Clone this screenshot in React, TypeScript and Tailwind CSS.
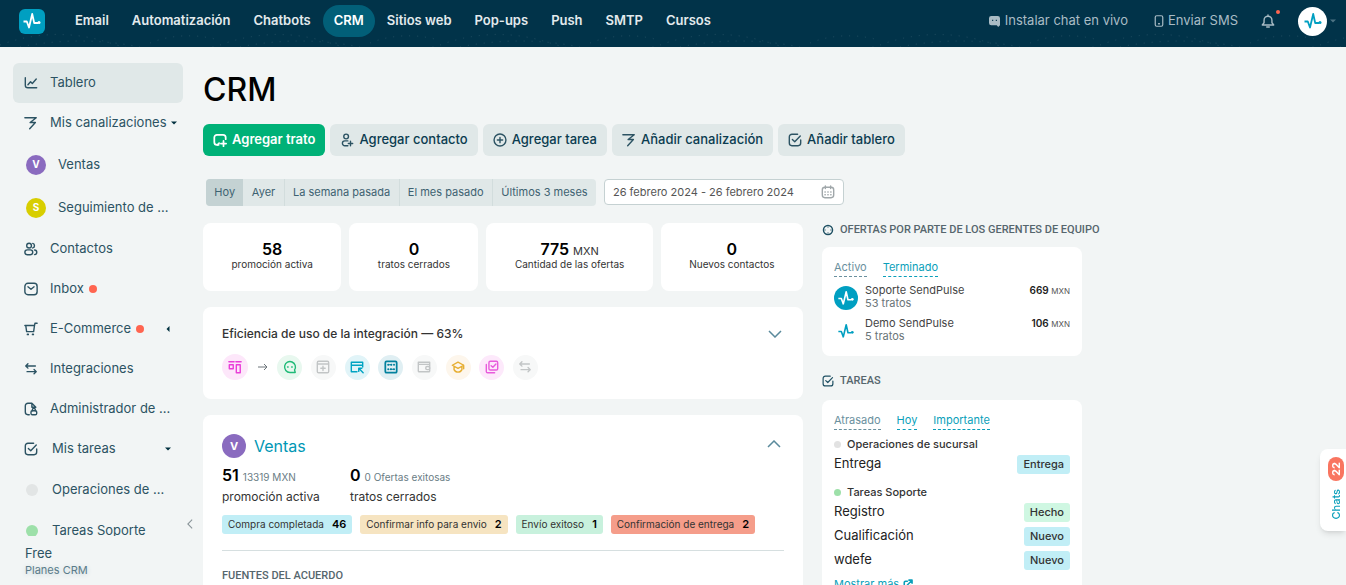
import type { ReactNode } from 'react'
import clsx from 'clsx'

const ICONS = {
  chart: <path d="M1.500 2v8.500a3 3 0 0 0 3 3H14.500M4.500 10 7.500 6.500l2 2L14 3.500" />,
  funnel: <path d="M1 2h13L7 7.500h6L6.500 14.500" />,
  people: (
    <>
      <circle cx="5.800" cy="4.200" r="2.700" />
      <path d="M10 1.600a2.700 2.700 0 0 1 0 5.200M12 9.200a2.600 2.600 0 0 1 0 5.200" />
      <rect x="1" y="9" width="9" height="5.500" rx="2.750" />
    </>
  ),
  mail: (
    <>
      <rect x="1" y="1.500" width="14" height="13" rx="3.500" />
      <path d="M4.500 5.500 8 8.300l3.500-2.800" />
    </>
  ),
  cart: (
    <>
      <path d="M1 4h11l-1 7H3L2 4M12 4l.5-2.500H15" />
      <path d="M4 14.200h.8M9.800 14.200h.8" strokeWidth="2" />
    </>
  ),
  swap: <path d="M4.500 2 2 4.500 4.500 7M2 4.500h11M11.500 8.500 14 11l-2.500 2.500M14 11H3.500" />,
  file: (
    <>
      <path d="M6 14.500H4.500a3 3 0 0 1-3-3v-7a3 3 0 0 1 3-3H9L13.500 6M9 1.500V6h4.500" />
      <rect x="8" y="10" width="6.500" height="4.500" rx="1.500" />
      <path d="M9.500 10V9a1.700 1.700 0 0 1 3.500 0v1" />
    </>
  ),
  task: (
    <>
      <path d="M11 1.500H4.500a3 3 0 0 0-3 3v7a3 3 0 0 0 3 3h7a3 3 0 0 0 3-3V8" />
      <path d="M5 7.500 7.700 10 14 3.500" />
    </>
  ),
  deal: (
    <>
      <path d="M6.500 13.500H4.500a3 3 0 0 1-3-3V5a3 3 0 0 1 3-3h7a3 3 0 0 1 3 3v2" />
      <path d="M5 13.500l2-2M12 9v6M9 12h6" />
    </>
  ),
  person: (
    <>
      <circle cx="7" cy="4" r="2.700" />
      <path d="M9 14.500H5.500a2.750 2.750 0 0 1 0-5.500H9M12 9.500v5M9.500 12h5" />
    </>
  ),
  plus: (
    <>
      <circle cx="8" cy="8" r="6.800" />
      <path d="M8 5v6M5 8h6" />
    </>
  ),
  calendar: (
    <>
      <rect x="1.500" y="2.500" width="13" height="12" rx="3" />
      <path d="M5 1v3M11 1v3" />
      <path d="M4.500 8h7M4.500 11.200h7" strokeDasharray=".4 2.900" />
    </>
  ),
  target: (
    <>
      <circle cx="8" cy="8" r="6" strokeWidth="2" />
      <path d="M8 4.200v.2M8 11.600v.2M4.200 8h.2M11.600 8h.2" strokeWidth="1.200" />
    </>
  ),
  bell: (
    <>
      <path d="M1.500 12.500h13l-2-2.500V7a4.500 4.500 0 0 0-9 0v3zM8 2.500V1" />
      <path d="M6.500 14.800h3" />
    </>
  ),
  phone: (
    <>
      <rect x="3" y="1" width="10" height="14" rx="2" />
      <path d="M7.500 11.800h1" strokeWidth="2" />
    </>
  ),
  board: (
    <>
      <path d="M1 2h6M9 2h6" />
      <rect x="1.500" y="5.500" width="4.500" height="4.500" />
      <rect x="9.500" y="5.500" width="4.500" height="9" />
    </>
  ),
  chat: (
    <>
      <path d="M14 14.200H8a6.200 6.200 0 1 1 5.200-2.800z" />
      <path d="M5.300 8h.5M10 8h.5" strokeWidth="1.800" />
    </>
  ),
  popup: (
    <>
      <rect x="1.500" y="1.500" width="13" height="13" rx="1.500" />
      <path d="M2 4.500h12M8 7v5M5.500 9.500h5" />
    </>
  ),
  site: (
    <>
      <path d="M8 13.500H1.500v-11h13V8M2 6h12.500" />
      <path d="M15 14.500 10 9.500m0 3.500V9.500h3.500" />
    </>
  ),
  flow: (
    <>
      <rect x="1.500" y="1.500" width="13" height="13" rx="1.500" strokeWidth="2" />
      <path d="M4.800 5.500h4M7 10.500h4" strokeWidth="1.200" />
      <path d="M4.800 5.500h.1M8.300 5.500h.1M11.400 5.500h.1M4.800 10.500h.1M7.900 10.500h.1M11.400 10.500h.1" strokeWidth="2.200" />
    </>
  ),
  wallet: (
    <>
      <path d="M14.500 5V2.500h-13v10a1 1 0 0 0 1 1h11a1 1 0 0 0 1-1V5H2" />
      <rect x="10" y="7.500" width="4.500" height="3.500" rx="1.500" />
    </>
  ),
  course: <path d="M8 2.500 1.500 6 8 9.500 14.500 6zM3.500 7.500v3.500a5 5 0 0 0 9 0V7.500M14.500 6v4" />,
  checks: (
    <>
      <rect x="4.500" y="1.500" width="10" height="10" rx="1.500" />
      <path d="M1.500 5v8a1.500 1.500 0 0 0 1.500 1.500h8M7 6.500 9 8.300l3.500-3.800" />
    </>
  ),
  external: (
    <>
      <path d="M7 3.500H4a2 2 0 0 0-2 2V12a2 2 0 0 0 2 2h6.500a2 2 0 0 0 2-2v-1.500" />
      <path d="M7 9.500 14 2.500M9.500 1.800H14.500V6.800" />
    </>
  ),
}

type IconName = keyof typeof ICONS

function Icon({ name, className = 'size-3.5' }: { name: IconName; className?: string }) {
  return (
    <svg
      viewBox="0 0 16 16"
      fill="none"
      stroke="currentColor"
      strokeWidth="1.6"
      strokeLinecap="round"
      strokeLinejoin="round"
      className={clsx('shrink-0', className)}
      aria-hidden
    >
      {ICONS[name]}
    </svg>
  )
}

function Pulse({ className }: { className: string }) {
  return (
    <svg viewBox="0 0 20 20" fill="none" stroke="currentColor" strokeWidth="1.8" className={className} aria-hidden>
      <path d="M1.500 10.500h3.300L7 16.500 10.200 3l2 9H16" strokeLinejoin="round" />
      <circle cx="17" cy="11.500" r="1.500" fill="currentColor" stroke="none" />
    </svg>
  )
}

function Caret({ className }: { className: string }) {
  return (
    <svg viewBox="0 0 6 4" fill="currentColor" className={clsx('h-1 w-1.5 shrink-0', className)} aria-hidden>
      <path d="M0 .5h6L3 3.500z" />
    </svg>
  )
}

function Chevron({ className }: { className: string }) {
  return (
    <svg viewBox="0 0 14 8" fill="none" stroke="currentColor" strokeWidth="1.5" className={className} aria-hidden>
      <path d="M1 1l6 6 6-6" />
    </svg>
  )
}

const SECTIONS = ['Email', 'Automatización', 'Chatbots', 'CRM', 'Sitios web', 'Pop-ups', 'Push', 'SMTP', 'Cursos']

function Header() {
  return (
    <header className="relative flex h-[47px] shrink-0 items-center bg-[#013349] pr-2.5 pb-[5px] pl-[19px] text-[13px]">
      <svg className="absolute inset-x-0 bottom-0 h-4 w-full" aria-hidden>
        <defs>
          <pattern id="dots" width="220" height="16" patternUnits="userSpaceOnUse">
            <path
              d="M0 14Q55-6 110 12T220 14M20 16Q80 4 140 16M150 12Q180 0 215 8"
              fill="none"
              stroke="#1d4a5e"
              strokeDasharray="1 7"
            />
          </pattern>
        </defs>
        <rect width="100%" height="16" fill="url(#dots)" />
      </svg>
      <a href="#" aria-label="SendPulse" className="mr-[19px] flex h-[25px] w-[26px] items-center justify-center rounded-md bg-[#009fc1] text-white">
        <Pulse className="size-5" />
      </a>
      <nav className="relative flex gap-px">
        {SECTIONS.map((name) => (
          <a
            key={name}
            href="#"
            className={clsx(
              'flex h-8 items-center rounded-full px-[11px] font-semibold whitespace-nowrap',
              name === 'CRM' ? 'bg-[#025f78] text-white' : 'text-[#e3eaed]',
            )}
          >
            {name}
          </a>
        ))}
      </nav>
      <div className="relative ml-auto flex items-center text-[#a9bcc5]">
        <a href="#" className="flex items-center gap-[5px]">
          <svg viewBox="0 0 12 12" className="size-[11px]" aria-hidden>
            <path d="M2.500 0h7A2.500 2.500 0 0 1 12 2.500V10l-2 2-1.500-2h-6A2.500 2.500 0 0 1 0 7.500v-5A2.500 2.500 0 0 1 2.500 0z" fill="currentColor" />
            <path d="M4 4v1.500M8 4v1.500" stroke="#013349" strokeWidth="1.200" />
          </svg>
          Instalar chat en vivo
        </a>
        <a href="#" className="ml-[25px] flex items-center gap-[3px]">
          <Icon name="phone" className="size-3" />
          Enviar SMS
        </a>
        <button aria-label="Notificaciones" className="relative ml-[23px]">
          <Icon name="bell" />
          <span className="absolute -top-1 -right-[5px] size-1 rounded-full bg-[#ff6550]" />
        </button>
        <button aria-label="Cuenta" className="ml-[23px] flex items-center gap-[3px]">
          <span className="flex size-[29px] items-center justify-center rounded-full bg-white text-[#009fc1]">
            <Pulse className="size-5" />
          </span>
          <Caret className="text-[#4d7383]" />
        </button>
      </div>
    </header>
  )
}

type NavRowProps = { icon?: IconName; children: ReactNode; active?: boolean; wide?: boolean; end?: ReactNode }

function NavRow({ icon, children, active, wide, end }: NavRowProps) {
  return (
    <a
      href="#"
      className={clsx(
        'flex h-10 shrink-0 items-center rounded-md pr-3 pl-[11px] whitespace-nowrap',
        wide ? 'gap-[14px]' : 'gap-3',
        active && 'bg-[#e0e8e8]',
      )}
    >
      {icon && <Icon name={icon} />}
      {children}
      {end}
    </a>
  )
}

function PipelineRow({ letter, color, name }: { letter: string; color: string; name: string }) {
  return (
    <a href="#" className="flex h-[43px] shrink-0 items-center gap-3 pl-[13px] whitespace-nowrap">
      <span className={clsx('flex size-5 items-center justify-center rounded-full text-[10px] font-bold text-white', color)}>
        {letter}
      </span>
      {name}
    </a>
  )
}

function BoardRow({ color, name }: { color: string; name: string }) {
  return (
    <a href="#" className="flex h-[41px] shrink-0 items-center gap-[14px] pl-[13px] whitespace-nowrap">
      <span className={clsx('size-3 rounded-full', color)} />
      {name}
    </a>
  )
}

function Sidebar() {
  const alert = <span className="-ml-[7px] size-2 rounded-full bg-[#ff6550]" />
  return (
    <aside className="flex w-[203px] shrink-0 pt-4 pl-[13px] text-[13px] text-[#2c5363]">
      <div className="flex min-h-0 w-[170px] flex-col">
        <nav className="flex min-h-0 flex-1 flex-col overflow-hidden">
          <NavRow icon="chart" active>Tablero</NavRow>
          <NavRow icon="funnel" end={<Caret className="-ml-2 text-[#01303f]" />}>Mis canalizaciones</NavRow>
          <PipelineRow letter="V" color="bg-[#8a6bbf]" name="Ventas" />
          <PipelineRow letter="S" color="bg-[#d8ce00]" name="Seguimiento de ..." />
          <NavRow icon="people">Contactos</NavRow>
          <NavRow icon="mail" end={alert}>Inbox</NavRow>
          <NavRow icon="cart" end={<>{alert}<Caret className="ml-auto rotate-90 text-[#01303f]" /></>}>E-Commerce</NavRow>
          <NavRow icon="swap">Integraciones</NavRow>
          <NavRow icon="file">Administrador de ...</NavRow>
          <NavRow icon="task" wide end={<Caret className="ml-auto text-[#01303f]" />}>Mis tareas</NavRow>
          <BoardRow color="bg-[#e2e5e5]" name="Operaciones de ..." />
          <BoardRow color="bg-[#9de0a9]" name="Tareas Soporte" />
        </nav>
        <div className="px-3 pt-2 pb-[7px]">
          <div className="leading-[18px]">Free</div>
          <a href="#" className="block text-[11px] leading-4 text-[#5b7c89] [text-shadow:0_1px_5px_#c3d2d7]">Planes CRM</a>
        </div>
      </div>
      <button aria-label="Contraer menú" className="mb-[58px] ml-0.5 self-end text-[#8a9599]">
        <Chevron className="h-1.5 w-2.5 rotate-90" />
      </button>
    </aside>
  )
}

const ACTIONS: { icon: IconName; label: string; primary?: boolean }[] = [
  { icon: 'deal', label: 'Agregar trato', primary: true },
  { icon: 'person', label: 'Agregar contacto' },
  { icon: 'plus', label: 'Agregar tarea' },
  { icon: 'funnel', label: 'Añadir canalización' },
  { icon: 'task', label: 'Añadir tablero' },
]

const PERIODS = ['Hoy', 'Ayer', 'La semana pasada', 'El mes pasado', 'Últimos 3 meses']

const STATS = [
  { value: '58', label: 'promoción activa' },
  { value: '0', label: 'tratos cerrados' },
  { value: '775', unit: 'MXN', label: 'Cantidad de las ofertas' },
  { value: '0', label: 'Nuevos contactos' },
]

const INTEGRATIONS: { icon: IconName; style: string }[] = [
  { icon: 'chat', style: 'bg-[#e8f8ef] text-[#1fba77]' },
  { icon: 'popup', style: 'bg-[#f7f8f8] text-[#c2c5c6]' },
  { icon: 'site', style: 'bg-[#e1f4f8] text-[#00a3c2]' },
  { icon: 'flow', style: 'bg-[#e0eff3] text-[#02819e]' },
  { icon: 'wallet', style: 'bg-[#f7f8f8] text-[#c2c5c6]' },
  { icon: 'course', style: 'bg-[#fdf6ec] text-[#e6ae32]' },
  { icon: 'checks', style: 'bg-[#fde9fb] text-[#e85bdc]' },
  { icon: 'swap', style: 'bg-[#f7f8f8] text-[#c2c5c6]' },
]

const STAGES = [
  { label: 'Compra completada', count: 46, color: 'bg-[#c1eef6]' },
  { label: 'Confirmar info para envio', count: 2, color: 'bg-[#f6e4c1]' },
  { label: 'Envío exitoso', count: 1, color: 'bg-[#c8f1dd]' },
  { label: 'Confirmación de entrega', count: 2, color: 'bg-[#f59d8a]' },
]

function Toolbar() {
  return (
    <>
      <h1 className="text-[32px] leading-10 font-medium text-black">CRM</h1>
      <div className="mt-3.5 flex gap-[5px]">
        {ACTIONS.map(({ icon, label, primary }) => (
          <button
            key={label}
            className={clsx(
              'flex h-8 items-center gap-[5px] rounded-md px-2.5 text-[13px] whitespace-nowrap',
              primary ? 'bg-[#00b177] font-semibold text-white' : 'bg-[#e0e8e8] font-medium text-[#0b3c50]',
            )}
          >
            <Icon name={icon} className={primary ? 'size-3.5 stroke-2' : 'size-3.5 text-[#2c5363]'} />
            {label}
          </button>
        ))}
      </div>
      <div className="mt-[23px] flex gap-2 pl-[3px] text-xs">
        <div className="flex h-[27px] w-[390px] overflow-hidden rounded bg-[#e0e8e8] text-[11px] text-[#3d6271]">
          {PERIODS.map((period, i) => (
            <button
              key={period}
              className={clsx(
                'flex-auto px-[7px] whitespace-nowrap',
                i === 0 && 'bg-[#c4d2d3]',
                i > 1 && 'border-l border-[#d2dddd]',
              )}
            >
              {period}
            </button>
          ))}
        </div>
        <div className="flex h-[26px] w-[240px] items-center rounded border border-[#c5d1d2] bg-white px-2 text-[#a0a7aa]">
          <input
            aria-label="Intervalo de fechas"
            className="min-w-0 flex-1 text-[11px] text-[#555] outline-none"
            defaultValue="26 febrero 2024 - 26 febrero 2024"
          />
          <Icon name="calendar" />
        </div>
      </div>
    </>
  )
}

function Overview() {
  return (
    <div className="flex w-[600px] shrink-0 flex-col gap-4">
      <div className="flex gap-2">
        {STATS.map(({ value, unit, label }) => (
          <div key={label} className="flex h-[68px] flex-auto flex-col items-center rounded-lg bg-white pt-[18px] whitespace-nowrap">
            <div className="text-base leading-[17px] font-semibold text-black">
              {value}
              {unit && <span className="ml-1 text-[11px] leading-none font-normal text-[#333]">{unit}</span>}
            </div>
            <div className="px-[25px] text-[10px] leading-[13px] text-[#333]">{label}</div>
          </div>
        ))}
      </div>

      <section className="h-[92px] rounded-lg bg-white pt-[18px] pr-[21px] pl-[19px]">
        <div className="flex items-center justify-between text-xs leading-[18px] font-medium text-[#333]">
          Eficiencia de uso de la integración — 63%
          <button aria-label="Mostrar" className="text-[#5a8a9c]">
            <Chevron className="h-2 w-3.5" />
          </button>
        </div>
        <div className="mt-[11px] flex w-[316px] items-center justify-between">
          <span className="flex size-[26px] items-center justify-center rounded-full bg-[#fde7fa] text-[#e93fd8]">
            <Icon name="board" />
          </span>
          <svg viewBox="0 0 10 8" fill="none" stroke="#6c757a" className="mx-px h-2 w-2.5" aria-hidden>
            <path d="M0 4h9M6 1l3 3-3 3" />
          </svg>
          {INTEGRATIONS.map(({ icon, style }) => (
            <span key={icon} className={clsx('flex size-[25px] items-center justify-center rounded-full', style)}>
              <Icon name={icon} />
            </span>
          ))}
        </div>
      </section>

      <section className="rounded-lg bg-white px-[19px] pt-[19px] pb-8 text-xs text-[#333]">
        <div className="flex items-center gap-2">
          <span className="flex size-6 items-center justify-center rounded-full bg-[#8a6bbf] text-[11px] font-bold text-white">V</span>
          <a href="#" className="text-base leading-6 text-[#0097b5]">Ventas</a>
          <button aria-label="Ocultar" className="mr-[3px] mb-1 ml-auto text-[#5a8a9c]">
            <Chevron className="h-2 w-3.5 rotate-180" />
          </button>
        </div>
        <div className="mt-[7px] flex">
          <div className="w-32">
            <div className="text-base leading-5 font-semibold text-black">
              51 <span className="text-[10px] leading-none font-normal text-[#6a7d85]">13319 MXN</span>
            </div>
            <div className="leading-6">promoción activa</div>
          </div>
          <div>
            <div className="text-base leading-5 font-semibold text-black">
              0 <span className="text-[10px] leading-none font-normal text-[#6a7d85]">0 Ofertas exitosas</span>
            </div>
            <div className="leading-6">tratos cerrados</div>
          </div>
        </div>
        <div className="mt-1.5 flex gap-2">
          {STAGES.map(({ label, count, color }) => (
            <a
              key={label}
              href="#"
              className={clsx('flex h-[19px] items-center gap-2 rounded-[3px] px-1.5 text-[10px] whitespace-nowrap', color)}
            >
              {label}
              <b className="text-[11px] font-semibold text-black">{count}</b>
            </a>
          ))}
        </div>
        <hr className="mt-4 border-[#d6dfe0]" />
        <h2 className="mt-[15px] font-['Roboto',sans-serif] text-[11px] leading-5 font-medium text-[#56666d]">
          FUENTES DEL ACUERDO
        </h2>
      </section>
    </div>
  )
}

const TASKS = [
  { board: 'Operaciones de sucursal', dot: 'bg-[#e2e2e2]', items: [['Entrega', 'Entrega']] },
  {
    board: 'Tareas Soporte',
    dot: 'bg-[#9de0a9]',
    items: [['Registro', 'Hecho'], ['Cualificación', 'Nuevo'], ['wdefe', 'Nuevo']],
  },
]

function TabLink({ muted, children }: { muted?: boolean; children: ReactNode }) {
  return (
    <button
      className={clsx(
        'border-b border-dashed text-[11px] leading-[17px]',
        muted ? 'border-[#6a909e] text-[#6a909e]' : 'border-[#0a9fba] text-[#0a9fba]',
      )}
    >
      {children}
    </button>
  )
}

function Manager({ name, deals, amount, solid }: { name: string; deals: string; amount: string; solid?: boolean }) {
  return (
    <div className="flex h-[33px] items-start gap-[7px]">
      <span
        className={clsx(
          'mt-0.5 flex size-6 items-center justify-center rounded-full',
          solid ? 'bg-[#009fc1] text-white' : 'text-[#009fc1]',
        )}
      >
        <Pulse className="size-[18px]" />
      </span>
      <div className="text-[11px] leading-[13px]">
        <div className="text-[#444]">{name}</div>
        <div className="text-[#6a7478]">{deals}</div>
      </div>
      <div className="ml-auto text-[10px] leading-[13px] font-semibold text-[#222]">
        {amount} <span className="text-[8px] font-normal text-[#555]">MXN</span>
      </div>
    </div>
  )
}

function Activity() {
  return (
    <div className="w-[284px] shrink-0 whitespace-nowrap">
      <h2 className="flex h-3.5 items-center gap-1.5 font-['Roboto',sans-serif] text-[11px] font-medium text-[#56666d]">
        <Icon name="target" className="size-3 text-[#1f5063]" />
        OFERTAS POR PARTE DE LOS GERENTES DE EQUIPO
      </h2>
      <section className="mt-2.5 w-[260px] rounded-lg bg-white px-3 pt-3 pb-1.5">
        <div className="mb-[7px] flex gap-4">
          <TabLink muted>Activo</TabLink>
          <TabLink>Terminado</TabLink>
        </div>
        <Manager name="Soporte SendPulse" deals="53 tratos" amount="669" solid />
        <Manager name="Demo SendPulse" deals="5 tratos" amount="106" />
      </section>

      <h2 className="mt-[18px] flex h-3.5 items-center gap-1.5 font-['Roboto',sans-serif] text-[11px] font-medium text-[#56666d]">
        <Icon name="task" className="size-3 text-[#1f5063]" />
        TAREAS
      </h2>
      <section className="mt-3 w-[260px] rounded-lg bg-white px-3 pt-3 pb-5 text-[#222]">
        <div className="mb-1.5 flex gap-4">
          <TabLink muted>Atrasado</TabLink>
          <TabLink>Hoy</TabLink>
          <TabLink>Importante</TabLink>
        </div>
        <div className="space-y-2">
          {TASKS.map(({ board, dot, items }) => (
            <div key={board}>
              <h3 className="flex items-center gap-1.5 text-[11px] leading-4 font-medium text-[#333]">
                <span className={clsx('size-[7px] rounded-full', dot)} />
                {board}
              </h3>
              {items.map(([task, status]) => (
                <div key={task} className="flex h-6 items-center justify-between text-[13px]">
                  {task}
                  <span
                    className={clsx(
                      'rounded-[3px] px-1.5 text-[11px] leading-[19px] font-medium text-[#333]',
                      status === 'Hecho' ? 'bg-[#cff7e2]' : 'bg-[#c1eef6]',
                    )}
                  >
                    {status}
                  </span>
                </div>
              ))}
            </div>
          ))}
        </div>
        <a href="#" className="mt-1 flex items-center gap-1 text-[11px] leading-4 text-[#0a9fba]">
          Mostrar más
          <Icon name="external" className="size-2.5 stroke-[2.5]" />
        </a>
      </section>
    </div>
  )
}

export default function App() {
  return (
    <div className="flex h-screen flex-col overflow-hidden bg-[#f2f5f5] font-['Inter','Liberation_Sans',sans-serif]">
      <Header />
      <div className="flex min-h-0 flex-1">
        <Sidebar />
        <main className="min-w-0 flex-1 overflow-hidden pt-[23px]">
          <Toolbar />
          <div className="mt-[17px] flex gap-[19px]">
            <Overview />
            <Activity />
          </div>
        </main>
      </div>
      <button className="fixed right-0 bottom-[54px] flex h-[82px] w-[26px] flex-col items-center gap-2 rounded-l-lg bg-white pt-2 pl-1.5 text-[11px] font-medium shadow-md">
        <span className="flex h-6 w-4 rotate-180 items-center justify-center rounded-full bg-[#f97560] font-bold text-white [writing-mode:vertical-rl]">
          22
        </span>
        <span className="rotate-180 text-[#0a9fba] [writing-mode:vertical-rl]">Chats</span>
      </button>
    </div>
  )
}
